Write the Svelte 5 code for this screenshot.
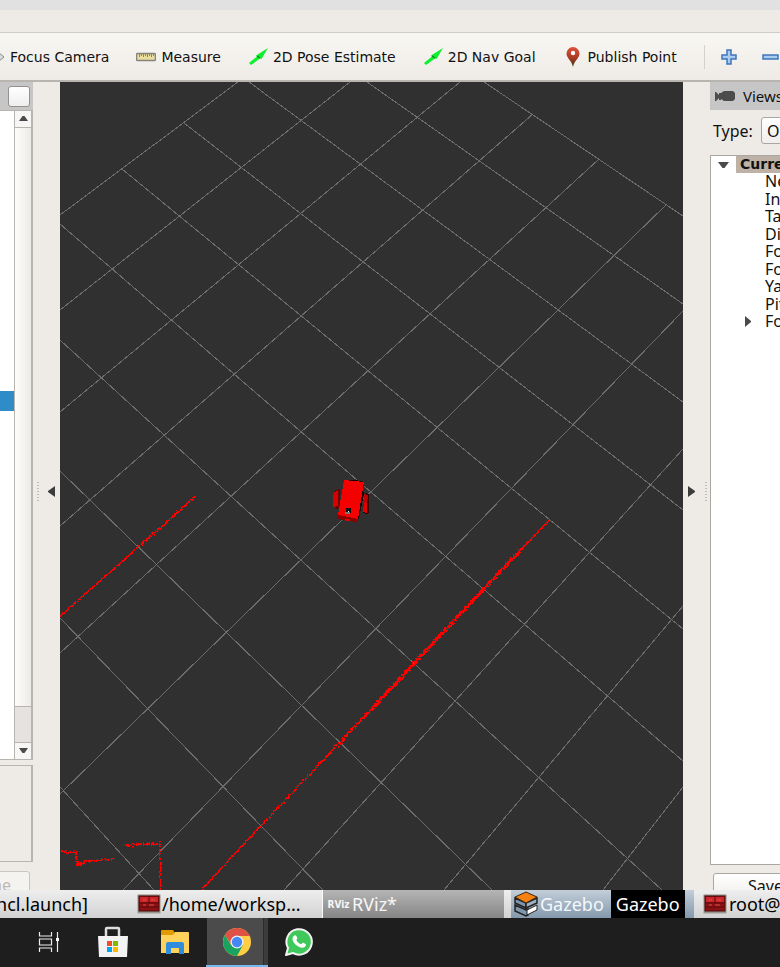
<script>
  const rising = [
    [238, 82, 60, 215], [350, 82, 60, 310], [460, 82, 60, 412], [533, 114, 60, 526],
    [599, 159, 60, 653], [667, 204, 60, 794], [683, 311, 123, 890], [683, 449, 284, 890],
    [683, 606, 444, 890], [683, 787, 603, 890]
  ];
  const falling = [
    [484, 82, 683, 216], [367, 82, 683, 304], [249, 82, 683, 402], [184, 123, 683, 510],
    [122, 169, 683, 629], [60, 224, 683, 761], [60, 340, 662, 890], [60, 471, 492, 890],
    [60, 618, 323, 890], [60, 787, 154, 890]
  ];

  // x1, y1, x2, y2, spread, density
  const walls = [
    [60, 615, 138, 546, 1, 1.2], [138, 546, 194, 496, 2, 1.6],
    [548, 520, 520, 549, 1, 1.8], [520, 549, 471, 601, 3, 4], [471, 601, 371, 708, 3, 4],
    [371, 708, 320, 762, 3, 2], [320, 762, 260, 825, 2, 1.2], [260, 825, 201, 889, 1, 1.2],
    [61, 851, 75, 851, 2, 0.9], [75, 850, 76, 862, 2, 1], [75, 863, 83, 863, 3, 2],
    [83, 861, 114, 858, 2, 0.9], [124, 845, 158, 842, 3, 1.3], [159, 841, 160, 889, 1, 0.7]
  ];

  function scan(segments) {
    let seed = 17;
    const rnd = () => (seed = (seed * 16807) % 2147483647) / 2147483647;
    let d = '';
    for (const [x1, y1, x2, y2, spread, density] of segments) {
      const n = Math.round(Math.max(Math.abs(x2 - x1), Math.abs(y2 - y1)) * density);
      for (let i = 0; i < n; i++) {
        const t = (i + rnd() * 0.5) / n;
        const x = Math.round(x1 + (x2 - x1) * t + (rnd() - 0.5) * spread);
        const y = Math.round(y1 + (y2 - y1) * t + (rnd() - 0.5) * spread);
        d += `M${x} ${y}h1v${rnd() > 0.5 ? 2 : 1}h-1z`;
        if (rnd() > 0.5) d += `M${x} ${y}h2v1h-2z`;
      }
    }
    return d;
  }
  const cloud = scan(walls);
  const props = ['Near Clip', 'Invert Z', 'Target', 'Distance', 'Focal', 'Focal', 'Yaw', 'Pitch', 'Focal Point'];
</script>

{#snippet arrow()}
  <svg width="20" height="20" viewBox="0 0 20 20"><path d="M1 16 9 9.500 8 8.500 20 1 13.500 12 12 11.500 3 18z" fill="#0ef02c" /><path d="m9 9 3 2" stroke="#078a19" stroke-width="1.500" /></svg>
{/snippet}
{#snippet terminal()}
  <svg width="24" height="20" viewBox="0 0 24 20"><rect x=".5" y=".5" width="23" height="19" rx="1" fill="#999792" stroke="#bdbab5" /><rect x="2" y="2" width="20" height="15" fill="#8d1013" stroke="#4b0b0d" /><path d="M3 3h18v5H3z" fill="#cf2429" /><path d="M2 9h20M2 13h20M12 2v7" stroke="#5a0a0c" /><path d="M6 6h3m5 0h4M6 11h3m3 0h5" stroke="#d9554f" /></svg>
{/snippet}

<div class="screen">
  <div class="title"></div>
  <div class="menu"></div>
  <div class="toolbar">
    <button><svg width="20" height="20" viewBox="0 0 20 20"><path d="M0 8.500h13V5l6 5-6 5v-3.500H0z" fill="#ddd" stroke="#888" /></svg>Focus Camera</button>
    <button><svg width="20" height="20" viewBox="0 0 20 20"><rect x=".5" y="6.500" width="19" height="7" rx="1" fill="#e9dda0" stroke="#85837c" stroke-width="1.500" /><path d="M3.500 7v3m2-3v2m2-2v3m2-3v2m2-2v3m2-3v2m2-2v3m2-3v2" stroke="#85837c" /></svg>Measure</button>
    <button>{@render arrow()}2D Pose Estimate</button>
    <button>{@render arrow()}2D Nav Goal</button>
    <button><svg width="20" height="20" viewBox="0 0 20 20"><defs><linearGradient id="pin" x2="0" y2="1"><stop stop-color="#e05038" /><stop offset=".55" stop-color="#a93a22" /><stop offset="1" stop-color="#37401e" /></linearGradient></defs><path d="M10 20C9 14 3.500 11 3.500 6.500a6.500 6.500 0 0 1 13 0C16.500 11 11 14 10 20z" fill="url(#pin)" /><circle cx="10" cy="6" r="2.200" fill="#fff" /></svg>Publish Point</button>
    <span class="sep"></span>
    <button aria-label="Add tool"><svg width="20" height="20" viewBox="0 0 20 20"><path d="M8 3h4v5h5v4h-5v5H8v-5H3V8h5z" fill="#a9cdf1" stroke="#3f74b8" stroke-width="1.500" /></svg></button>
    <button aria-label="Remove tool"><svg width="20" height="20" viewBox="0 0 20 20"><path d="M3 8h15v4H3z" fill="#a9cdf1" stroke="#3f74b8" stroke-width="1.500" /></svg></button>
  </div>

  <main>
    <aside class="left">
      <div class="dockhead"><button aria-label="Float panel"></button></div>
      <div class="displays">
        <div class="list"><div class="selected"></div></div>
        <div class="scroll">
          <button aria-label="Scroll up"><svg width="9" height="6" viewBox="0 0 9 6"><path d="M0 5 3.500 0h2L9 5z" fill="#4a4a4a" /></svg></button>
          <div class="thumb"></div>
          <div class="groove"></div>
          <button aria-label="Scroll down"><svg width="9" height="6" viewBox="0 0 9 6"><path d="M0 0 3.500 5h2L9 0z" fill="#4a4a4a" /></svg></button>
        </div>
      </div>
      <div class="info"></div>
      <button class="rename" disabled>Rename</button>
    </aside>
    <div class="split">
      <span class="dots"></span>
      <svg width="7" height="11" viewBox="0 0 7 11"><path d="M7 0v11L0 6V5z" fill="#3c3c3c" /></svg>
    </div>

    <svg class="view" viewBox="60 82 623 808" preserveAspectRatio="xMidYMid slice" role="img" aria-label="3D view">
      <rect x="-940" y="-918" width="2623" height="2808" fill="#303030" />
      <g stroke="#6c6c6c" shape-rendering="crispEdges">
        {#each [...rising, ...falling] as [x1, y1, x2, y2]}
          <line {x1} {y1} {x2} {y2} />
        {/each}
      </g>
      <path d={cloud} fill="#f00" shape-rendering="crispEdges" />
      <g shape-rendering="crispEdges">
        <path d="m344 480 12 0 8 2-1 8 1 4-5 24-3 4-17-3-1-4z" fill="#160000" />
        <path d="m335 490 5-1v18l-3 2-3-2z" fill="#700000" />
        <path d="m334 492 4-1v15l-5 1v-10z" fill="#d80000" />
        <path d="m365 493 4 1v18l-2 2-4-1z" fill="#300000" />
        <path d="m364 494 4 1-1 8-4 1z" fill="#c00000" />
        <path d="m364 503 3 0v10l-4-1z" fill="#e40000" />
        <path d="m344 480 20 2-6 37-20-4z" fill="#f40000" />
        <path d="m338 515 20 4-1 3-9-1-10-2z" fill="#8c0000" />
        <path d="M345 519h5v2h-5z" fill="#e00000" />
        <path d="M346 508h5v5h-5z" fill="#111" /><path d="M347 512h3v2h-5v-2z" fill="#777" /><path d="M348 511h1v1h-1z" fill="#fff" />
      </g>
    </svg>

    <div class="split right">
      <span class="dots"></span>
      <svg width="7" height="11" viewBox="0 0 7 11"><path d="M0 0v11l7-5V5z" fill="#3c3c3c" /></svg>
    </div>
    <aside class="views">
      <div class="dockhead"><svg width="20" height="12" viewBox="0 0 20 12"><path d="M0 2h1l3 3V3h2v7H4V8l-3 3H0zM9 1h9l2 2v6l-2 2H9L6 9V3z" fill="#4c4c4c" /></svg><span>Views</span></div>
      <div class="type"><label for="view-type">Type:</label><select id="view-type"><option>Orbit (rviz)</option></select></div>
      <div class="tree">
        <div class="current"><svg width="11" height="6" viewBox="0 0 11 6"><path d="M0 0h11L6.500 6h-2z" fill="#4a4a4a" /></svg><b>Current View</b></div>
        {#each props as name, i}
          <div class="prop">{#if i === 8}<svg width="6" height="11" viewBox="0 0 6 11"><path d="M0 0v11l6-5V5z" fill="#4a4a4a" /></svg>{/if}<span>{name}</span></div>
        {/each}
      </div>
      <button class="save">Save</button>
    </aside>
  </main>

  <nav class="windows">
    <button class="w1">ncl.launch]</button>
    <button class="w2">{@render terminal()}/home/worksp...</button>
    <button class="w3"><span class="rv">RViz</span>RViz*</button>
    <button class="w4">
      <svg width="26" height="26" viewBox="0 0 26 26"><path d="m2 7 11 5v5L2 12zM2 14l11 5 2-1v6l-2 1-11-5z" fill="#7f96ad" stroke="#222" stroke-width="1.500" /><path d="m24 7-11 5v5l11-5z" fill="#9fb0c0" stroke="#222" stroke-width="1.500" /><path d="m13 1 11 5-11 6L2 6z" fill="#f58113" stroke="#3b2a17" /><path d="m14 19 10-5v5l-10 5z" fill="#fff" stroke="#222" /></svg>
      <span>Gazebo</span><span class="tip">Gazebo</span>
    </button>
    <button class="w5">{@render terminal()}root@</button>
  </nav>

  <nav class="tasks">
    <button aria-label="Task View"><svg width="28" height="28" viewBox="0 0 28 28"><path d="M2.500 4v4h12V4M2.500 24v-4h12v4M2.500 11v6h12v-6zM20.500 4v20" fill="none" stroke="#eee" stroke-width="1.200" /><path d="M19 10h3v3h-3z" fill="#fff" /></svg></button>
    <button aria-label="Store"><svg width="30" height="32" viewBox="0 0 30 32"><path d="M8 10V3q0-1 1-1h11q1 0 1 1v7" fill="none" stroke="#ddd" stroke-width="2.500" /><path d="M0 10h30l-1 21H1z" fill="#f3f3f3" /><path d="M9 15h5v5H9z" fill="#f25022" /><path d="M15 15h5v5h-5z" fill="#7fba00" /><path d="M9 21h5v5H9z" fill="#00a4ef" /><path d="M15 21h5v5h-5z" fill="#ffb900" /></svg></button>
    <button aria-label="File Explorer"><svg width="28" height="24" viewBox="0 0 28 24"><path d="M0 1q0-1 1-1h11l2 3-2 3H0z" fill="#e09b00" /><path d="M0 5h12l2-3h13q1 0 1 1v20H0z" fill="#ffd35b" /><path d="M5 24V14q0-2 2-2h14q2 0 2 2v10h-5v-6h-8v6z" fill="#2f8ddb" /></svg></button>
    <button class="active" aria-label="Chrome"><svg width="28" height="28" viewBox="0 0 28 28"><circle cx="14" cy="14" r="14" fill="#ffce44" /><path d="M1.900 7A14 14 0 0 1 26.600 8H14l-5.500 9z" fill="#de5246" /><path d="M1.900 7A14 14 0 0 0 14 28l6-11-6 3-6-3z" fill="#1aa260" /><circle cx="14" cy="14" r="6.500" fill="#f1f1f1" /><circle cx="14" cy="14" r="5.200" fill="#4587f3" /></svg></button>
    <button aria-label="WhatsApp"><svg width="28" height="28" viewBox="0 0 28 28"><path d="M1 27 3 20A12.700 12.700 0 1 1 8 25z" fill="#3fc95b" stroke="#f2f2f2" stroke-width="2" stroke-linejoin="round" /><path d="M9.500 7.500c1-.7 2 0 2.700 2.500.3 1-.8 1.500-.8 2 .8 2 2.600 3.500 4.600 4.300.7.100 1.200-1.500 2-1.500.5 0 3 1.200 3 1.700 0 2-1.500 3-3.300 3.200C13 20 7.500 14.500 7.500 11c0-1.600.9-2.900 2-3.500z" fill="#fff" /></svg></button>
  </nav>
</div>

<style>
  :global(body) { background: #1e1e1e; overflow: hidden; }
  * { box-sizing: border-box; }
  button { border: 0; padding: 0; margin: 0; background: none; font: inherit; color: inherit; }
  svg { flex: none; display: block; }
  .screen { height: 100vh; display: flex; flex-direction: column; background: #eeebe7; color: #111; font-family: "Noto Sans", sans-serif; }
  .title { height: 10px; background: #e1e1e1; flex: none; }
  .menu { height: 22px; flex: none; }
  .toolbar { height: 50px; flex: none; display: flex; align-items: center; gap: 27px; padding-top: 1px; margin-left: -15px; border-top: 1px solid #cfcbc6; border-bottom: 2px solid #b8b4b0; background: linear-gradient(#f9f7f3, #eeebe7); font: 14px "DejaVu Sans", sans-serif; overflow: hidden; white-space: nowrap; }
  .toolbar button { display: flex; align-items: center; gap: 5px; flex: none; }
  .toolbar .sep { width: 1px; height: 24px; background: #d4d0cb; margin-right: -13px; flex: none; }
  .toolbar .sep ~ button { margin-right: -6px; }

  main { flex: 1; min-height: 0; display: grid; grid-template-columns: 33px 27px 1fr 27px 70px; overflow: hidden; }
  .left { display: flex; flex-direction: column; min-height: 0; overflow: hidden; }
  .dockhead { height: 28px; flex: none; background: #c6c6c6; display: flex; align-items: center; }
  .left .dockhead button { width: 22px; height: 21px; margin-left: 8px; border: 1px solid #96918c; border-radius: 3px; background: linear-gradient(#fff, #eee); }
  .displays { flex: 1; min-height: 0; display: flex; border: solid #b8b4b0; border-width: 1px 2px 1px 0; background: #fff; }
  .list { width: 14px; }
  .selected { height: 20px; margin-top: 280px; background: #308cc6; }
  .scroll { flex: 1; display: flex; flex-direction: column; border-left: 1px solid #b8b4b0; background: #e6e2df; }
  .scroll button { height: 16px; display: flex; align-items: center; justify-content: center; background: #f7f6f4; }
  .thumb { flex: 1; border: solid #b8b4b0; border-width: 1px 0; background: linear-gradient(90deg, #fdfdfc, #edebe7); }
  .groove { height: 36px; border-bottom: 1px solid #b8b4b0; }
  .info { height: 97px; margin-top: 5px; border: solid #b8b4b0; border-width: 1px 2px 1px 0; flex: none; }
  .rename { flex: none; height: 27px; margin: 9px 3px -8px -80px; padding-right: 18px; border: 1px solid #c9c5c0; border-radius: 3px; background: #f5f3f0; color: #bdb9b4; font-size: 16px; line-height: 20px; text-align: right; }
  .split { display: flex; align-items: center; gap: 9px; padding: 11px 0 0 4px; }
  .dots { width: 2px; height: 20px; background: repeating-linear-gradient(#bbb 0 1px, transparent 1px 3px); }
  .split.right { flex-direction: row-reverse; gap: 10px; padding: 11px 3px 0 0; }
  .view { width: 100%; height: 100%; min-height: 0; }
  .views { display: flex; flex-direction: column; min-height: 0; overflow: hidden; font-size: 16px; white-space: nowrap; }
  .views .dockhead { padding-left: 5px; gap: 8px; }
  .views .dockhead span { line-height: 24px; font-size: 15px; }
  .type { height: 45px; flex: none; display: flex; align-items: center; gap: 8px; padding: 0 0 4px 3px; }
  .type label { flex: none; }
  .type select { appearance: none; width: 140px; flex: none; height: 27px; padding: 0 5px; border: 1px solid #aaa6a1; border-radius: 3px; background: linear-gradient(#fff, #f0eeeb); font: inherit; color: inherit; }
  .tree { flex: 1; min-height: 0; border: 1px solid #aaa6a1; background: #fff; margin-right: -1px; overflow: hidden; }
  .current { display: flex; align-items: center; padding-left: 7px; gap: 7px; }
  .current b { flex: 1; padding-left: 4px; background: #beb1a5; font: bold 14px/17px "DejaVu Sans", sans-serif; }
  .prop { display: flex; align-items: center; justify-content: flex-end; gap: 14px; width: 154px; height: 17px; line-height: 17px; }
  .prop:nth-child(odd) { height: 18px; }
  .prop span { width: 100px; flex: none; }
  .save { flex: none; height: 26px; width: 140px; margin: 8px 0 -9px 3px; padding-left: 34px; text-align: left; line-height: 20px; border: 1px solid #aaa6a1; border-radius: 3px; background: linear-gradient(#fff, #f0eeeb); }

  .windows { height: 28px; flex: none; display: flex; background: linear-gradient(#eee, #d2d2d2); font: 18px "Noto Sans", sans-serif; color: #000; overflow: hidden; white-space: nowrap; }
  .windows button { display: flex; align-items: center; flex: none; }
  .windows .w1 { width: 88px; justify-content: flex-end; }
  .windows .w2 { width: 235px; padding-left: 49px; gap: 1px; border-right: 1px solid #fafafa; }
  .windows .w3 { width: 181px; padding-left: 4px; gap: 2px; color: #f6f6f6; background: linear-gradient(#b5b5b5, #858585); }
  .windows .rv { width: 23px; font: bold 10px "DejaVu Sans Condensed", "DejaVu Sans", sans-serif; }
  .windows .w4 { width: 183px; margin-left: 7px; padding-left: 2px; gap: 1px; color: #f4f8fc; background: linear-gradient(#c3ced8, #8499ad); }
  .w4 .tip { align-self: stretch; display: flex; align-items: center; margin-left: 6px; padding: 0 5px; background: #000; color: #fff; }
  .windows .w5 { padding-left: 9px; gap: 2px; }
  .tasks { height: 49px; flex: none; display: flex; padding-left: 20px; background: #1e1e1e; }
  .tasks button { width: 62px; display: flex; align-items: center; justify-content: center; border-bottom: 2px solid transparent; }
  .tasks .active { background: linear-gradient(90deg, transparent 1px, #4b4b4b 1px 57px, #2b2b2b 57px 58px, #3c3c3c 58px); border-bottom-color: #76b9ed; }
</style>
